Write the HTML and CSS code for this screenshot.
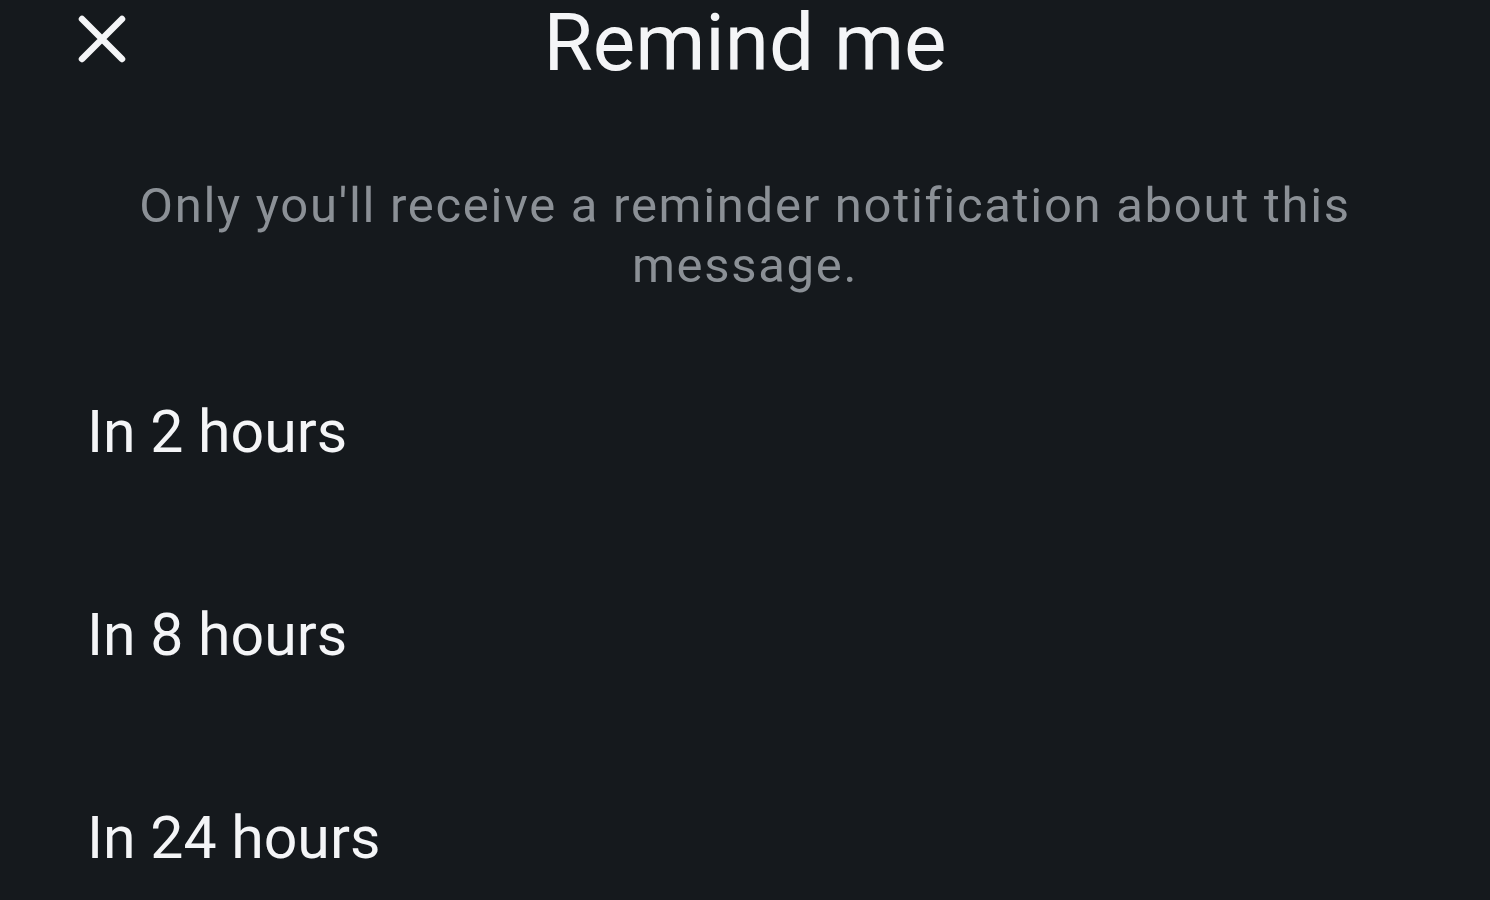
FILE: index.html
```html
<!DOCTYPE html>
<html lang="en">
<head>
  <meta charset="UTF-8" />
  <meta name="viewport" content="width=device-width, initial-scale=1.0"/>
  <title>Remind me</title>
  <link rel="stylesheet" href="styles.css">
</head>
<body>

  <div class="header">
    <button class="close" aria-label="Close">
      <svg viewBox="0 0 48 48" width="48" height="48">
        <path d="M4 4 L44 44 M44 4 L4 44" stroke="#f4f5f7" stroke-width="6.5" stroke-linecap="round" fill="none"/>
      </svg>
    </button>
    <h1>Remind me</h1>
    <div></div>
  </div>

  <p class="note">Only you'll receive a reminder notification about this message.</p>

  <ul class="options">
    <li>In 2 hours</li>
    <li>In 8 hours</li>
    <li>In 24 hours</li>
  </ul>

</body>
</html>
```

FILE: styles.css
```css
body {
  margin: 0;
  background-color: #15191d;
  color: #f4f5f7;
  font-family: Roboto, "Noto Sans", sans-serif;
  overflow: hidden;
}

.header {
  display: grid;
  grid-template-columns: 1fr auto 1fr;
  align-items: start;
  height: 84px;
  padding: 0 78px;
  box-sizing: border-box;
}

.close {
  justify-self: start;
  margin-top: 15px;
  padding: 0;
  width: 48px;
  height: 48px;
  background: none;
  border: none;
  cursor: pointer;
}

.close svg {
  display: block;
}

h1 {
  margin: 0;
  padding-top: 3px;
  font-size: 80px;
  font-weight: 400;
  line-height: 80px;
}

.note {
  margin: 92px auto 0;
  max-width: 1260px;
  text-align: center;
  font-size: 49px;
  letter-spacing: 1.7px;
  line-height: 60px;
  color: #8b9096;
}

.options {
  list-style: none;
  margin: 34px 0 0;
  padding: 0 0 0 87px;
}

.options li {
  font-size: 59px;
  line-height: 203px;
  cursor: pointer;
}
```
